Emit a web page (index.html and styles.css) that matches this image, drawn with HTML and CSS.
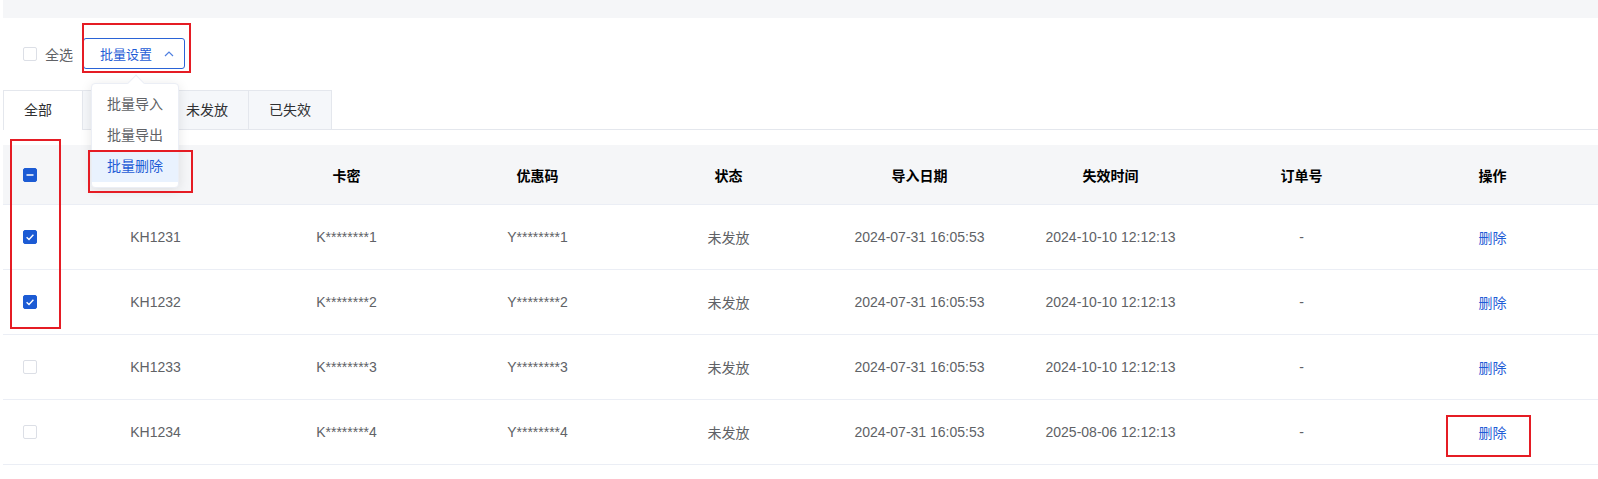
FILE: index.html
```html
<!DOCTYPE html>
<html lang="zh-CN">
<head>
<meta charset="utf-8">
<title>卡密管理</title>
<link rel="stylesheet" href="styles.css">
</head>
<body>
<div class="page">
  <div class="band"></div>

  <div class="toolbar">
    <label class="check-all">
      <span class="cb"></span>
      <span class="check-label">全选</span>
    </label>
    <div class="dd">
      <button class="btn" type="button">
        <span>批量设置</span>
        <svg class="chev" width="10" height="6" viewBox="0 0 10 6"><polyline points="1,5 5,1 9,5" fill="none" stroke="currentColor" stroke-width="1.2"/></svg>
      </button>
      <div class="menu">
        <span class="menu-arrow"></span>
        <div class="menu-item">批量导入</div>
        <div class="menu-item">批量导出</div>
        <div class="menu-item is-hover">批量删除</div>
      </div>
    </div>
  </div>

  <div class="tabs">
    <div class="tab is-active">全部</div>
    <div class="tab">已发放</div>
    <div class="tab">未发放</div>
    <div class="tab tab-last">已失效</div>
  </div>

  <div class="grid">
    <div class="row head">
      <div class="cell cell-check"><span class="cb on"><svg width="14" height="14" viewBox="0 0 14 14"><rect x="3.5" y="6.25" width="7" height="1.5" fill="#fff"/></svg></span></div>
      <div class="cell">卡号</div>
      <div class="cell">卡密</div>
      <div class="cell">优惠码</div>
      <div class="cell">状态</div>
      <div class="cell">导入日期</div>
      <div class="cell">失效时间</div>
      <div class="cell">订单号</div>
      <div class="cell">操作</div>
    </div>

    <div class="row">
      <div class="cell cell-check"><span class="cb on"><svg width="14" height="14" viewBox="0 0 14 14"><polyline points="3.6,7.2 6,9.4 10.4,4.8" fill="none" stroke="#fff" stroke-width="1.4"/></svg></span></div>
      <div class="cell">KH1231</div>
      <div class="cell">K********1</div>
      <div class="cell">Y********1</div>
      <div class="cell cjk">未发放</div>
      <div class="cell">2024-07-31 16:05:53</div>
      <div class="cell">2024-10-10 12:12:13</div>
      <div class="cell">-</div>
      <div class="cell cjk"><a class="link">删除</a></div>
    </div>

    <div class="row">
      <div class="cell cell-check"><span class="cb on"><svg width="14" height="14" viewBox="0 0 14 14"><polyline points="3.6,7.2 6,9.4 10.4,4.8" fill="none" stroke="#fff" stroke-width="1.4"/></svg></span></div>
      <div class="cell">KH1232</div>
      <div class="cell">K********2</div>
      <div class="cell">Y********2</div>
      <div class="cell cjk">未发放</div>
      <div class="cell">2024-07-31 16:05:53</div>
      <div class="cell">2024-10-10 12:12:13</div>
      <div class="cell">-</div>
      <div class="cell cjk"><a class="link">删除</a></div>
    </div>

    <div class="row">
      <div class="cell cell-check"><span class="cb"></span></div>
      <div class="cell">KH1233</div>
      <div class="cell">K********3</div>
      <div class="cell">Y********3</div>
      <div class="cell cjk">未发放</div>
      <div class="cell">2024-07-31 16:05:53</div>
      <div class="cell">2024-10-10 12:12:13</div>
      <div class="cell">-</div>
      <div class="cell cjk"><a class="link">删除</a></div>
    </div>

    <div class="row">
      <div class="cell cell-check"><span class="cb"></span></div>
      <div class="cell">KH1234</div>
      <div class="cell">K********4</div>
      <div class="cell">Y********4</div>
      <div class="cell cjk">未发放</div>
      <div class="cell">2024-07-31 16:05:53</div>
      <div class="cell">2025-08-06 12:12:13</div>
      <div class="cell">-</div>
      <div class="cell cjk"><a class="link">删除</a></div>
    </div>
  </div>

  <div class="mark mark-btn"></div>
  <div class="mark mark-menu"></div>
  <div class="mark mark-col"></div>
  <div class="mark mark-del"></div>
</div>
</body>
</html>
```

FILE: styles.css
```css
* { box-sizing: border-box; }

body {
  margin: 0;
  background: #fff;
  font-family: "Liberation Sans", "Noto Sans CJK SC", sans-serif;
  font-size: 14px;
  color: #606266;
}

.page {
  position: relative;
  width: 1598px;
  height: 479px;
  padding-left: 3px;
  overflow: hidden;
}

.band {
  height: 18px;
  background: #f5f6f8;
}

/* toolbar */
.toolbar {
  display: flex;
  align-items: center;
  padding: 20px 0 0 20px;
}

.check-all {
  display: flex;
  align-items: center;
  gap: 8px;
  margin-right: 10px;
  color: #606266;
  font-size: 14px;
}

.cb {
  width: 14px;
  height: 14px;
  border: 1px solid #dcdfe6;
  border-radius: 2px;
  background: #fff;
  display: inline-flex;
  align-items: center;
  justify-content: center;
  flex: none;
  position: relative;
}

.cb svg {
  position: absolute;
  left: -1px;
  top: -1px;
}

.cb.on {
  background: #1c5bd4;
  border-color: #1c5bd4;
}

.dd {
  position: relative;
}

.btn {
  height: 31px;
  width: 102px;
  display: flex;
  align-items: center;
  gap: 12px;
  padding: 0 0 0 16px;
  border: 1px solid #2a63d6;
  border-radius: 3px;
  background: #fff;
  color: #1f5dd6;
  font-family: inherit;
  font-size: 13px;
  cursor: pointer;
}

.chev {
  color: #4f7fe0;
}

.menu {
  position: absolute;
  left: 8px;
  top: 45px;
  width: 88px;
  padding: 5px 0;
  background: #fff;
  border: 1px solid #ebeef5;
  border-radius: 4px;
  box-shadow: 0 2px 12px rgba(0, 0, 0, 0.1);
  z-index: 5;
}

.menu-arrow {
  position: absolute;
  left: 38px;
  top: -7px;
  width: 12px;
  height: 12px;
  background: #fff;
  border-top: 1px solid #ebeef5;
  border-left: 1px solid #ebeef5;
  transform: rotate(45deg);
}

.menu-item {
  position: relative;
  height: 31px;
  line-height: 31px;
  padding: 0 15px;
  color: #606266;
  font-size: 14px;
  white-space: nowrap;
}

.menu-item.is-hover {
  background: #e9f2fe;
  color: #1f5dd6;
}

/* tabs */
.tabs {
  display: flex;
  margin-top: 21px;
  height: 40px;
  border-bottom: 1px solid #e4e7ed;
}

.tab {
  min-width: 79px;
  height: 39px;
  line-height: 39px;
  padding: 0 20px;
  border-top: 1px solid #e4e7ed;
  border-left: 1px solid #e4e7ed;
  background: #f5f7fa;
  color: #303133;
  font-size: 14px;
}

.tab-last {
  border-right: 1px solid #e4e7ed;
}

.tab.is-active {
  height: 40px;
  background: #fff;
}

/* table */
.grid {
  margin-top: 15px;
}

.row {
  display: grid;
  grid-template-columns: 57px repeat(8, 191px);
  height: 65px;
  border-bottom: 1px solid #ebeef5;
  font-size: 14px;
}

.row.head {
  height: 60px;
  background: #f5f6f8;
  font-size: 14px;
  font-weight: 700;
  color: #000;
}

.cell {
  display: flex;
  align-items: center;
  justify-content: center;
  white-space: nowrap;
}

.cell.cjk {
  font-size: 14px;
}

.cell-check {
  justify-content: flex-start;
  padding-left: 20px;
}

.link {
  color: #1f5dd6;
  cursor: pointer;
}

/* annotation boxes */
.mark {
  position: absolute;
  border: 2px solid #e51c24;
  z-index: 10;
  pointer-events: none;
}

.mark-btn { left: 82px; top: 23px; width: 109px; height: 50px; }
.mark-menu { left: 88px; top: 150px; width: 105px; height: 43px; }
.mark-col { left: 10px; top: 139px; width: 51px; height: 190px; }
.mark-del { left: 1446px; top: 415px; width: 85px; height: 42px; }
```
